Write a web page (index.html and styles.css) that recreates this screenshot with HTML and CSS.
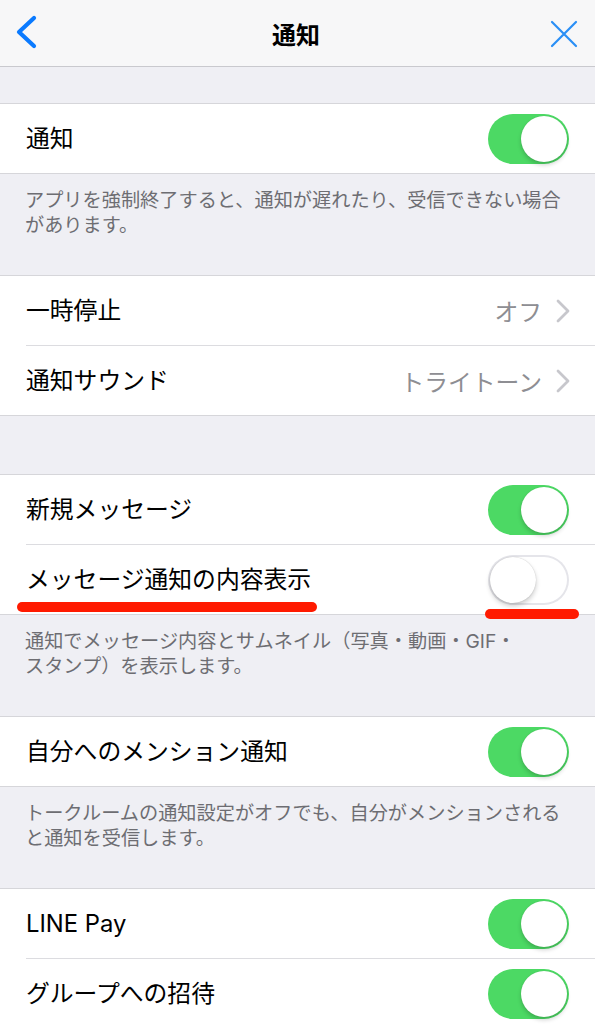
FILE: index.html
```html
<!DOCTYPE html>
<html lang="ja">
<head>
<meta charset="utf-8">
<title>通知</title>
<link rel="stylesheet" href="styles.css">
</head>
<body>
<div class="screen">
  <header class="nav">
    <svg class="nav-back" width="24" height="36" viewBox="0 0 24 36"><path d="M20 3 L5 17 L20 31" fill="none" stroke="#0a7aff" stroke-width="4.2" stroke-linecap="round" stroke-linejoin="round"/></svg>
    <div class="nav-title">通知</div>
    <svg class="nav-close" width="28" height="28" viewBox="0 0 28 28"><path d="M2 2 L26 26 M26 2 L2 26" fill="none" stroke="#2a8ff5" stroke-width="2.2" stroke-linecap="round"/></svg>
  </header>

  <div class="gap-top"></div>

  <section class="group">
    <div class="row"><span class="label">通知</span><span class="toggle on"><span class="knob"></span></span></div>
  </section>
  <p class="footer">アプリを強制終了すると、通知が遅れたり、受信できない場合があります。</p>

  <section class="group">
    <div class="row"><span class="label">一時停止</span><span class="detail">オフ<svg class="chev" width="14" height="24" viewBox="0 0 14 24"><path d="M2 2 L12 12 L2 22" fill="none" stroke="#c7c7cc" stroke-width="2.8" stroke-linecap="round" stroke-linejoin="round"/></svg></span></div>
    <div class="row"><span class="label">通知サウンド</span><span class="detail">トライトーン<svg class="chev" width="14" height="24" viewBox="0 0 14 24"><path d="M2 2 L12 12 L2 22" fill="none" stroke="#c7c7cc" stroke-width="2.8" stroke-linecap="round" stroke-linejoin="round"/></svg></span></div>
  </section>
  <div class="gap-empty"></div>

  <section class="group">
    <div class="row"><span class="label">新規メッセージ</span><span class="toggle on"><span class="knob"></span></span></div>
    <div class="row marked"><span class="label">メッセージ通知の内容表示</span><span class="toggle off"><span class="knob"></span></span>
      <span class="mark mark-label"></span><span class="mark mark-toggle"></span>
    </div>
  </section>
  <p class="footer">通知でメッセージ内容とサムネイル（写真・動画・GIF・<br>スタンプ）を表示します。</p>

  <section class="group">
    <div class="row"><span class="label">自分へのメンション通知</span><span class="toggle on"><span class="knob"></span></span></div>
  </section>
  <p class="footer">トークルームの通知設定がオフでも、自分がメンションされると通知を受信します。</p>

  <section class="group">
    <div class="row"><span class="label">LINE Pay</span><span class="toggle on"><span class="knob"></span></span></div>
    <div class="row"><span class="label">グループへの招待</span><span class="toggle on"><span class="knob"></span></span></div>
  </section>
</div>
</body>
</html>
```

FILE: styles.css
```css
* { box-sizing: border-box; }
html, body { margin: 0; padding: 0; }
body {
  background: #efeff4;
  font-family: "Inter", "Noto Sans CJK JP", sans-serif;
  color: #000;
  width: 595px;
  height: 1024px;
  overflow: hidden;
}
.screen { width: 595px; }

.nav {
  height: 67px;
  background: #f7f7f8;
  border-bottom: 1px solid #c9c9ce;
  display: flex;
  align-items: center;
  justify-content: space-between;
  padding: 0 17px 0 14px;
}
.nav-back { display: block; margin-top: -1px; }
.nav-title {
  font-size: 24px;
  font-weight: 700;
  margin-left: 4px;
}
.nav-close { display: block; margin-top: 1px; }

.gap-top { height: 36px; }
.gap-empty { height: 58px; }

.group {
  background: #fff;
  border-top: 1px solid #d6d6da;
  border-bottom: 1px solid #d6d6da;
}
.row {
  position: relative;
  height: 69px;
  margin-left: 26px;
  padding-right: 26px;
  display: flex;
  align-items: center;
  justify-content: space-between;
}
.row + .row { border-top: 1px solid #dcdce0; height: 70px; }
.label {
  font-size: 23.8px;
  line-height: 1;
}
.detail {
  display: flex;
  align-items: center;
  font-size: 23.8px;
  color: #8e8e93;
}
.chev { margin-left: 14px; margin-right: -1px; display: block; }

.toggle {
  position: relative;
  width: 81px;
  height: 50px;
  border-radius: 25px;
  flex: none;
}
.toggle.on { background: #4cd964; }
.toggle.off {
  background: #fff;
  box-shadow: inset 0 0 0 2px #e5e5ea;
}
.knob {
  position: absolute;
  top: 2px;
  width: 46px;
  height: 46px;
  border-radius: 50%;
  background: #fff;
  box-shadow: 0 3px 4px rgba(0,0,0,0.18), 0 0 1px rgba(0,0,0,0.15);
}
.toggle.on .knob { right: 2px; }
.toggle.off .knob { left: 2px; box-shadow: 0 3px 5px rgba(0,0,0,0.2), 0 0 1px rgba(0,0,0,0.25); }

.mark {
  position: absolute;
  height: 10px;
  border-radius: 5px;
  background: #ff1a00;
  z-index: 2;
}
.mark-label { left: -9px; width: 300px; bottom: 2px; }
.mark-toggle { right: 16px; width: 94px; bottom: -5px; }

.footer {
  margin: 0;
  padding: 14px 20px 36px 25px;
  font-size: 19.2px;
  line-height: 25px;
  color: #6d6d72;
  height: 101px;
}
```
